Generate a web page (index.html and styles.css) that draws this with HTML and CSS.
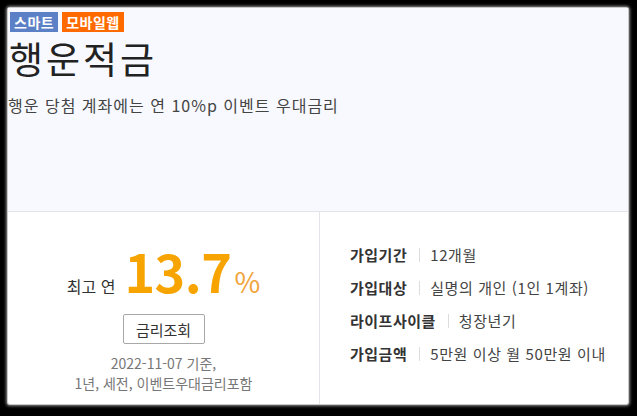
FILE: index.html
```html
<!DOCTYPE html>
<html lang="ko">
<head>
<meta charset="utf-8">
<title>행운적금</title>
<link rel="stylesheet" href="styles.css">
</head>
<body>
<div class="card">
  <section class="head">
    <div class="badges">
      <span class="badge blue">스마트</span>
      <span class="badge orange">모바일웹</span>
    </div>
    <h1 class="title">행운적금</h1>
    <p class="sub">행운 당첨 계좌에는 연 10%p 이벤트 우대금리</p>
  </section>
  <section class="body">
    <div class="rate">
      <div class="rate-row">
        <span class="rate-label">최고 연</span>
        <span class="rate-num">13.7</span>
        <span class="rate-pct">%</span>
      </div>
      <button class="btn">금리조회</button>
      <p class="note">2022-11-07 기준,<br>1년, 세전, 이벤트우대금리포함</p>
    </div>
    <div class="info">
      <div class="row"><span class="lbl">가입기간</span><span class="sep"></span><span class="val">12개월</span></div>
      <div class="row"><span class="lbl">가입대상</span><span class="sep"></span><span class="val">실명의 개인 (1인 1계좌)</span></div>
      <div class="row"><span class="lbl">라이프사이클</span><span class="sep"></span><span class="val">청장년기</span></div>
      <div class="row"><span class="lbl">가입금액</span><span class="sep"></span><span class="val">5만원 이상 월 50만원 이내</span></div>
    </div>
  </section>
</div>
</body>
</html>
```
FILE: styles.css
```css
html, body {
  margin: 0;
  padding: 0;
  background: #000;
}
body {
  width: 637px;
  height: 416px;
  overflow: hidden;
  font-family: "Noto Sans CJK KR", "Noto Sans", sans-serif;
}
.card {
  margin: 8px 0 0 8px;
  width: 620px;
  height: 396px;
  background: #fff;
  display: flex;
  flex-direction: column;
  box-shadow: 0 0 0 1px #c8c8c8, 0 0 3px 2px #8a8a8a;
  border-radius: 2px;
}
.head {
  height: 203px;
  background: #f8f9fe;
  border-bottom: 1px solid #e2e4ea;
  padding: 0 0 0 1px;
}
.badges {
  display: flex;
  gap: 4px;
  height: 20px;
  padding-top: 4px;
}
.badge {
  display: inline-flex;
  align-items: center;
  height: 20px;
  padding: 0 4px;
  color: #fff;
  font-size: 14px;
  font-weight: 700;
  line-height: 20px;
  letter-spacing: 0.5px;
}
.blue { background: #5b80c6; margin-left: 1px; }
.orange { background: #ff6a00; }
.title {
  margin: 4px 0 0 0;
  font-size: 37px;
  line-height: 44px;
  font-weight: 400;
  color: #222;
  letter-spacing: 3px;
}
.sub {
  margin: 14px 0 0 -1px;
  font-size: 16px;
  line-height: 22px;
  color: #444;
  letter-spacing: 1px;
}
.body {
  flex: 1;
  display: flex;
}
.rate {
  width: 311px;
  border-right: 1px solid #e2e4ea;
  display: flex;
  flex-direction: column;
  align-items: center;
  padding-top: 32px;
}
.rate-row {
  display: flex;
  align-items: baseline;
  height: 54px;
}
.rate-label {
  font-size: 16px;
  color: #333;
  margin-right: 9px;
}
.rate-num {
  font-size: 52px;
  line-height: 54px;
  font-weight: 700;
  color: #f7a400;
  letter-spacing: -0.5px;
}
.rate-pct {
  font-size: 28px;
  color: #f0a43a;
  margin-left: 3px;
}
.btn {
  margin-top: 16px;
  width: 82px;
  height: 30px;
  border: 1px solid #a8a8a8;
  border-radius: 2px;
  background: #fff;
  font-family: inherit;
  font-size: 15px;
  color: #333;
  padding: 0;
}
.note {
  margin: 9px 0 0 0;
  text-align: center;
  font-size: 14px;
  line-height: 20px;
  color: #777;
}
.info {
  flex: 1;
  padding: 26px 0 0 30px;
  display: flex;
  flex-direction: column;
}
.row {
  display: flex;
  align-items: center;
  height: 33px;
  font-size: 15px;
}
.lbl {
  font-weight: 700;
  color: #333;
  letter-spacing: 0.5px;
}
.sep {
  width: 1px;
  height: 14px;
  background: #ddd;
  margin: 0 10px 0 12px;
}
.val {
  color: #444;
  letter-spacing: 0.6px;
}
```
